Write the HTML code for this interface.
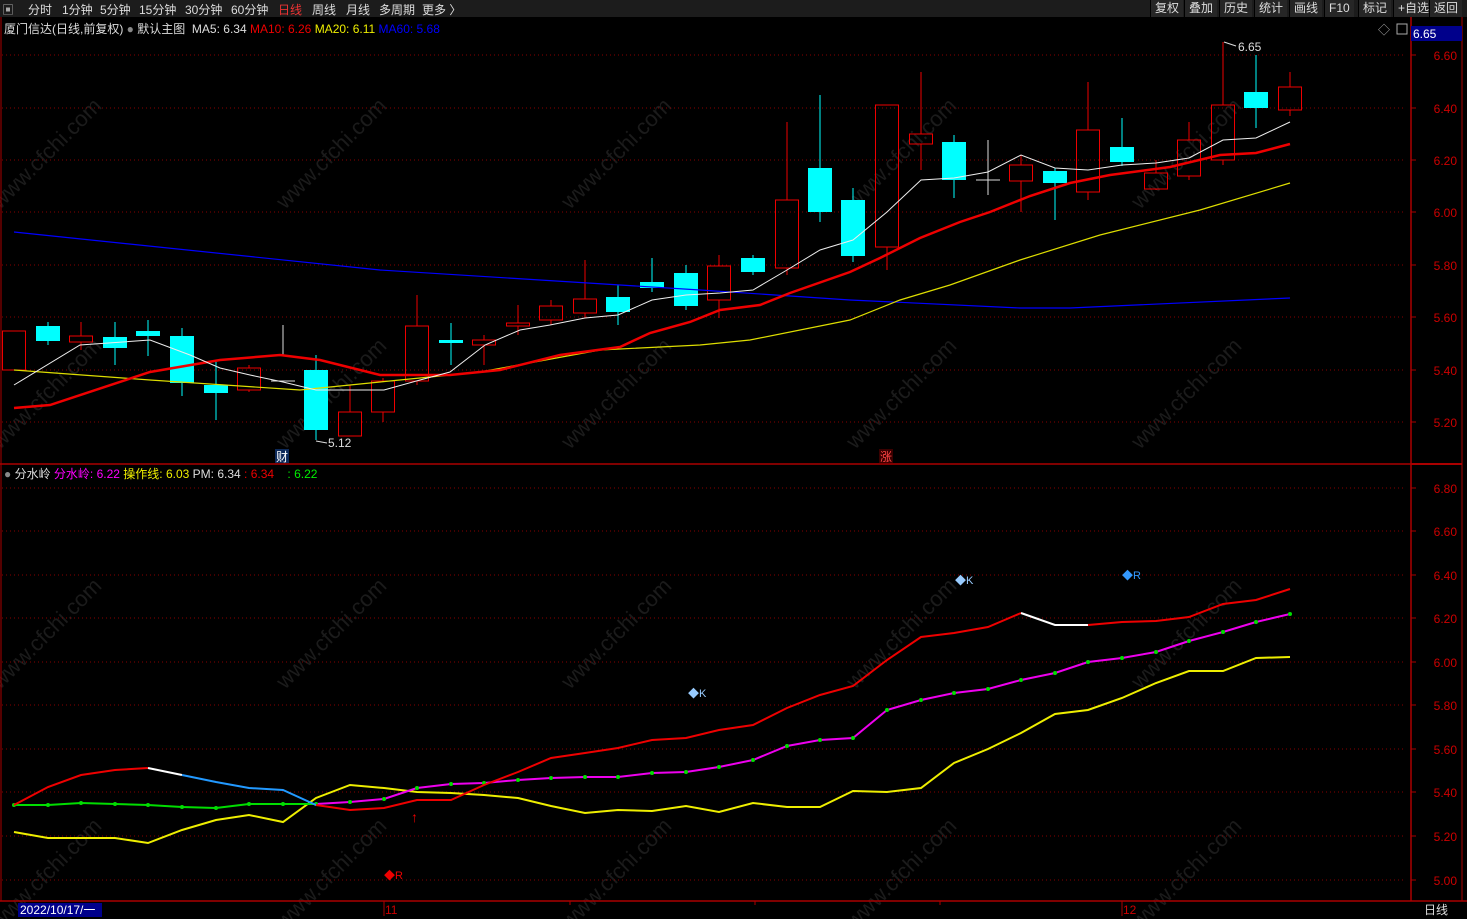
<!DOCTYPE html>
<html><head><meta charset="utf-8">
<style>
body{margin:0;background:#000;width:1467px;height:919px;overflow:hidden;font-family:"Liberation Sans","Noto Sans CJK SC",sans-serif;}
.tb{position:absolute;left:0;top:0;width:1467px;height:17px;background:#1c1c1c;color:#ddd;font-size:12px;}
.tb span{position:absolute;top:1px;}
.rb span{position:absolute;top:0;height:17px;line-height:17px;background:#262626;padding:0 4px;border-left:1px solid #000;}
svg{position:absolute;left:0;top:0}
</style></head><body>
<div class="tb">
<span style="left:2px;color:#aaa">▣</span>
<span style="left:28px">分时</span><span style="left:62px">1分钟</span><span style="left:100px">5分钟</span><span style="left:139px">15分钟</span><span style="left:185px">30分钟</span><span style="left:231px">60分钟</span><span style="left:278px;color:#e33">日线</span><span style="left:312px">周线</span><span style="left:346px">月线</span><span style="left:379px">多周期</span><span style="left:422px">更多 〉</span>
<div class="rb"><span style="left:1150px">复权</span><span style="left:1184px">叠加</span><span style="left:1219px">历史</span><span style="left:1254px">统计</span><span style="left:1289px">画线</span><span style="left:1324px">F10</span><span style="left:1358px">标记</span><span style="left:1393px">+自选</span><span style="left:1429px">返回</span></div>
</div>
<svg id="s" width="1467" height="919" style="top:0">
</svg>
<div style="position:absolute;left:4px;top:20px;font-size:12px;white-space:nowrap;color:#ddd">厦门信达(日线,前复权) <span style="color:#888">●</span> 默认主图 &nbsp;MA5: 6.34 <span style="color:#e00">MA10: 6.26</span> <span style="color:#ee0">MA20: 6.11</span> <span style="color:#00f">MA60: 5.68</span></div>
<div style="position:absolute;left:4px;top:465px;font-size:12px;white-space:nowrap;color:#ddd"><span style="color:#888">●</span> 分水岭 <span style="color:#f0f">分水岭: 6.22</span> <span style="color:#ee0">操作线: 6.03</span> PM: 6.34 <span style="color:#e00">: 6.34</span> &nbsp;&nbsp;&nbsp;<span style="color:#0e0">: 6.22</span></div>
<script>
var s=document.getElementById('s'),h='';
function L(x1,y1,x2,y2,c,w,d){h+='<line x1="'+x1+'" y1="'+y1+'" x2="'+x2+'" y2="'+y2+'" stroke="'+c+'" stroke-width="'+(w||1)+'"'+(d?' stroke-dasharray="'+d+'"':'')+'/>';}
function T(x,y,t,c,sz,a){h+='<text x="'+x+'" y="'+y+'" fill="'+c+'" font-size="'+(sz||12)+'" font-family="Liberation Sans,Noto Sans CJK SC,sans-serif"'+(a?' text-anchor="'+a+'"':'')+'>'+t+'</text>';}
function P(pts,c,w){h+='<polyline fill="none" stroke="'+c+'" stroke-width="'+(w||1)+'" points="'+pts.map(p=>p.join(',')).join(' ')+'"/>';}
// watermarks
for(var i=0;i<5;i++)for(var j=0;j<4;j++){var x=0+i*285,y=210+j*240;h+='<text x="'+x+'" y="'+y+'" fill="#1b1b1b" font-size="22" transform="rotate(-45 '+x+' '+y+')">www.cfchi.com</text>';}
// frames
L(0,464,1411,464,'#a00',1.5);L(1411,17,1411,901,'#a00',1.5);L(1462,17,1462,901,'#a00',1);L(0,901,1467,901,'#a00',1.5);L(1411,464,1462,464,'#a00',2);
L(1,17,1,901,'#a00',1);
var up=[[55,'6.60'],[108,'6.40'],[160,'6.20'],[212,'6.00'],[265,'5.80'],[317,'5.60'],[370,'5.40'],[422,'5.20']];
up.forEach(g=>{L(2,g[0],1405,g[0],'#800','1','1 3');L(1411,g[0],1416,g[0],'#a00');T(1457,g[0]+5,g[1],'#c00',12,'end');});
var lo=[[488,'6.80'],[531,'6.60'],[575,'6.40'],[618,'6.20'],[662,'6.00'],[705,'5.80'],[749,'5.60'],[792,'5.40'],[836,'5.20'],[880,'5.00']];
lo.forEach(g=>{L(2,g[0],1405,g[0],'#800','1','1 3');L(1411,g[0],1416,g[0],'#a00');T(1457,g[0]+5,g[1],'#c00',12,'end');});
h+='<rect x="1411" y="26" width="51" height="15" fill="#00008b"/>';T(1413,38,'6.65','#fff',12);
T(1378,34,'◇','#aaa',12);h+='<rect x="1397" y="24" width="10" height="10" fill="none" stroke="#aaa"/>';
var C=[[14,331,370,331,370,'r'],[48,326,341,322,345,'c'],[81,336,342,322,350,'r'],[115,337,348,322,365,'c'],[148,331,336,320,356,'c'],[182,336,383,328,396,'c'],[216,385,393,362,420,'c'],[249,368,390,365,392,'r'],[283,381,383,325,355,'w'],[316,370,430,355,440,'c'],[350,412,436,385,436,'r'],[383,381,412,378,422,'r'],[417,326,381,295,385,'r'],[451,340,343,323,365,'c'],[484,340,345,335,365,'r'],[518,323,326,305,335,'r'],[551,306,320,300,325,'r'],[585,299,313,260,318,'r'],[618,297,312,285,325,'c'],[652,282,288,258,292,'c'],[686,273,306,265,310,'c'],[719,266,300,255,318,'r'],[753,258,272,255,275,'c'],[787,200,268,122,275,'r'],[820,168,212,95,222,'c'],[853,200,256,188,262,'c'],[887,105,247,105,270,'r'],[921,134,144,72,170,'r'],[954,142,180,135,198,'c'],[988,180,182,140,195,'w'],[1021,165,181,155,212,'r'],[1055,171,183,168,220,'c'],[1088,130,192,82,200,'r'],[1122,147,162,118,166,'c'],[1156,173,189,160,190,'r'],[1189,140,176,122,180,'r'],[1223,105,160,42,165,'r'],[1256,92,108,55,128,'c'],[1290,87,110,72,116,'r']];
C.forEach(c=>{var x=c[0],a=c[1],b=c[2];
if(c[5]=='c'){L(x,c[3],x,c[4],'#0ff');h+='<rect x="'+(x-12)+'" y="'+a+'" width="24" height="'+Math.max(2,b-a)+'" fill="#0ff"/>';}
else if(c[5]=='r'){L(x,c[3],x,a,'#e00');L(x,b,x,c[4],'#e00');h+='<rect x="'+(x-11.5)+'" y="'+a+'" width="23" height="'+(b-a)+'" fill="none" stroke="#e00"/>';}
else{L(x,c[3],x,c[4],'#ddd');L(x-12,a,x+12,a,'#ddd');}});
T(1238,51,'6.65','#ddd',12);L(1224,42,1236,46,'#ddd');T(328,447,'5.12','#ddd',12);L(316,441,327,443,'#ddd');
h+='<rect x="275" y="449" width="14" height="14" fill="#0d2a5a"/>';T(276,461,'财','#fff',12);
h+='<rect x="879" y="449" width="14" height="14" fill="#3a0000"/>';T(880,461,'涨','#f44',12);
P([[14,232],[380,270],[700,290],[850,300],[1020,308],[1070,308],[1290,298]],'#00f',1.2);
P([[14,370],[150,380],[300,390],[380,382],[480,372],[600,350],[700,345],[750,340],[850,320],[900,300],[950,285],[1020,260],[1100,235],[1200,210],[1290,183]],'#dd0',1.2);
P([[14,408],[50,405],[150,372],[220,360],[280,355],[320,360],[380,375],[450,375],[500,370],[560,355],[620,347],[650,333],[690,322],[720,310],[760,305],[790,293],[850,272],[880,258],[920,238],[960,222],[990,212],[1030,196],[1070,183],[1110,175],[1170,167],[1220,155],[1256,153],[1290,144]],'#e00',2.5);
P([[14,385],[80,345],[150,340],[190,355],[220,368],[250,375],[283,382],[316,390],[350,390],[384,390],[420,380],[450,372],[485,345],[520,330],[550,325],[585,318],[618,315],[652,300],[686,295],[720,293],[753,290],[787,270],[820,250],[853,240],[887,212],[921,180],[954,178],[988,172],[1021,155],[1055,168],[1088,170],[1122,165],[1156,163],[1189,158],[1223,140],[1256,138],[1290,122]],'#eee',1);
var Y=[[14,832],[48,838],[81,838],[115,838],[148,843],[182,830],[216,820],[249,815],[283,822],[316,798],[350,785],[384,788],[417,792],[451,793],[484,795],[518,798],[551,806],[585,813],[618,810],[652,811],[686,806],[719,812],[753,803],[787,807],[820,807],[853,791],[887,792],[921,788],[954,763],[988,749],[1021,733],[1055,714],[1088,710],[1122,698],[1156,683],[1189,671],[1223,671],[1256,658],[1290,657]];
P(Y,'#ee0',2);
var M=[[14,805],[48,805],[81,803],[115,804],[148,805],[182,807],[216,808],[249,804],[283,804],[316,804],[350,802],[384,799],[417,788],[451,784],[484,783],[518,780],[551,778],[585,777],[618,777],[652,773],[686,772],[719,767],[753,760],[787,746],[820,740],[853,738],[887,710],[921,700],[954,693],[988,689],[1021,680],[1055,673],[1088,662],[1122,658],[1156,652],[1189,641],[1223,632],[1256,622],[1290,614]];
P(M.slice(0,10),'#0d0',2);P(M.slice(9),'#e0e',2);
M.forEach(p=>{h+='<circle cx="'+p[0]+'" cy="'+p[1]+'" r="2" fill="#0d0"/>';});
P([[14,805],[48,787],[81,775],[115,770],[148,768]],'#e00',2);P([[148,768],[182,775]],'#fff',2);P([[182,775],[216,782],[249,788],[283,790],[316,805]],'#29f',2);
P([[316,805],[350,810],[384,808],[417,800],[451,800],[484,785],[518,772],[551,758],[585,753],[618,748],[652,740],[686,738],[719,730],[753,725],[787,708],[820,695],[853,686],[887,660],[921,637],[954,633],[988,627],[1021,613]],'#e00',2);
P([[1021,613],[1055,625],[1088,625]],'#fff',2);
P([[1088,625],[1122,622],[1156,621],[1189,617],[1223,604],[1256,600],[1290,589]],'#e00',2);
T(688,697,'◆K','#9cf',11);T(955,584,'◆K','#9cf',11);T(1122,579,'◆R','#39f',11);T(384,879,'◆R','#e00',11);
T(411,822,'↑','#e00',14);
h+='<rect x="18" y="903" width="84" height="14" fill="#00008b"/>';T(20,914,'2022/10/17/一','#fff',12);
L(384,901,384,916,'#a00');T(385,914,'11','#c00',12);L(1122,901,1122,916,'#a00');T(1123,914,'12','#c00',12);
L(570,901,570,905,'#a00');L(755,901,755,905,'#a00');L(940,901,940,905,'#a00');
T(1424,914,'日线','#ddd',12);
s.innerHTML=h;
</script>
</body></html>
